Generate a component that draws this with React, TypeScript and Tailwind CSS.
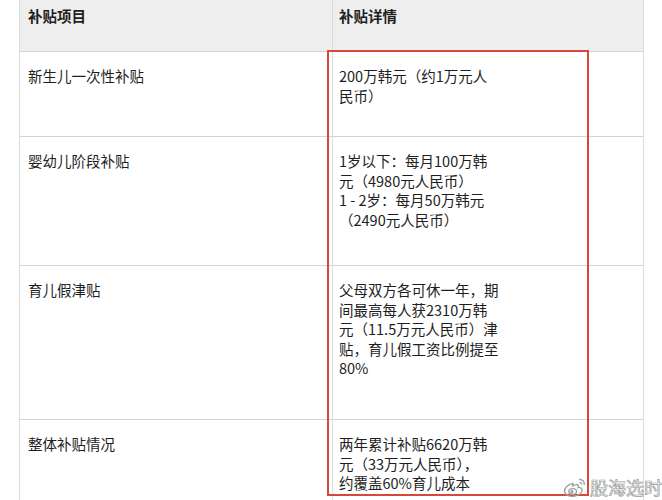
const rows: { item: string; detail: string[]; h: string }[] = [
  { item: "新生儿一次性补贴", detail: ["200万韩元（约1万元人", "民币）"], h: "h-[85px]" },
  {
    item: "婴幼儿阶段补贴",
    detail: ["1岁以下：每月100万韩", "元（4980元人民币）", "1 - 2岁：每月50万韩元", "（2490元人民币）"],
    h: "h-[129px]",
  },
  {
    item: "育儿假津贴",
    detail: [
      "父母双方各可休一年，期",
      "间最高每人获2310万韩",
      "元（11.5万元人民币）津",
      "贴，育儿假工资比例提至",
      "80%",
    ],
    h: "h-[154px]",
  },
  {
    item: "整体补贴情况",
    detail: ["两年累计补贴6620万韩", "元（33万元人民币），", "约覆盖60%育儿成本"],
    h: "h-[90px]",
  },
];

function WeiboMark() {
  return (
    <svg width="26" height="21" viewBox="0 0 22 18" fill="none" stroke="#a0a0a0" strokeWidth="1.2">
      <path d="M9 5.5C5 6.5 1.8 9.5 2 12.3c.3 3 4 4.6 8 4.2 4.4-.4 7.3-2.9 7-5.4-.2-1.7-1.8-2.5-3.3-2.1.6-1.6.1-2.7-1.6-2.5-1 .1-2 .5-3 1 .4-1.4.1-2.2-.1-2z" />
      <ellipse cx="9" cy="12.4" rx="3.3" ry="2.4" />
      <circle cx="8.3" cy="12.6" r="0.8" fill="#a0a0a0" />
      <path d="M14.5 2.2c2.6-.4 5 1.7 4.5 4.6" />
      <path d="M14.8 4.6c1.2-.2 2.2.8 2 2" />
    </svg>
  );
}

export default function App() {
  return (
    <div className="relative h-[500px] w-[662px] overflow-hidden bg-white font-['Noto_Sans_CJK_SC','Noto_Sans',sans-serif] text-[14.5px] leading-[19.5px] text-[#1e1e1e]">
      <div className="ml-[19px] w-[625px] border-x border-[#dcdcdc]">
        <div className="grid h-[52px] grid-cols-[313px_1fr] border-b border-[#d4d4d4] bg-[#eeeeee] font-bold">
          <div className="border-r border-[#dcdcdc] pl-2 pt-[6px]">补贴项目</div>
          <div className="pl-[6px] pt-[6px]">补贴详情</div>
        </div>
        {rows.map((r) => (
          <div key={r.item} className={`grid grid-cols-[313px_1fr] border-b border-[#d4d4d4] ${r.h}`}>
            <div className="border-r border-[#e2e2e2] pl-2 pt-[14px]">{r.item}</div>
            <div className="pl-[6px] pt-[14px]">
              {r.detail.map((l) => (
                <div key={l} className="whitespace-nowrap">
                  {l}
                </div>
              ))}
            </div>
          </div>
        ))}
      </div>

      {/* red highlight box */}
      <div className="absolute left-[327px] top-[50px] h-[446px] w-[262px] border-[2.5px] border-[#d6483a]" />

      {/* watermark */}
      <div className="absolute left-[562px] top-[477px] flex items-center gap-[2px]">
        <WeiboMark />
        <span className="text-[18px] leading-[21px] text-white [-webkit-text-stroke:0.7px_#9a9a9a]">股海选时</span>
      </div>
    </div>
  );
}
